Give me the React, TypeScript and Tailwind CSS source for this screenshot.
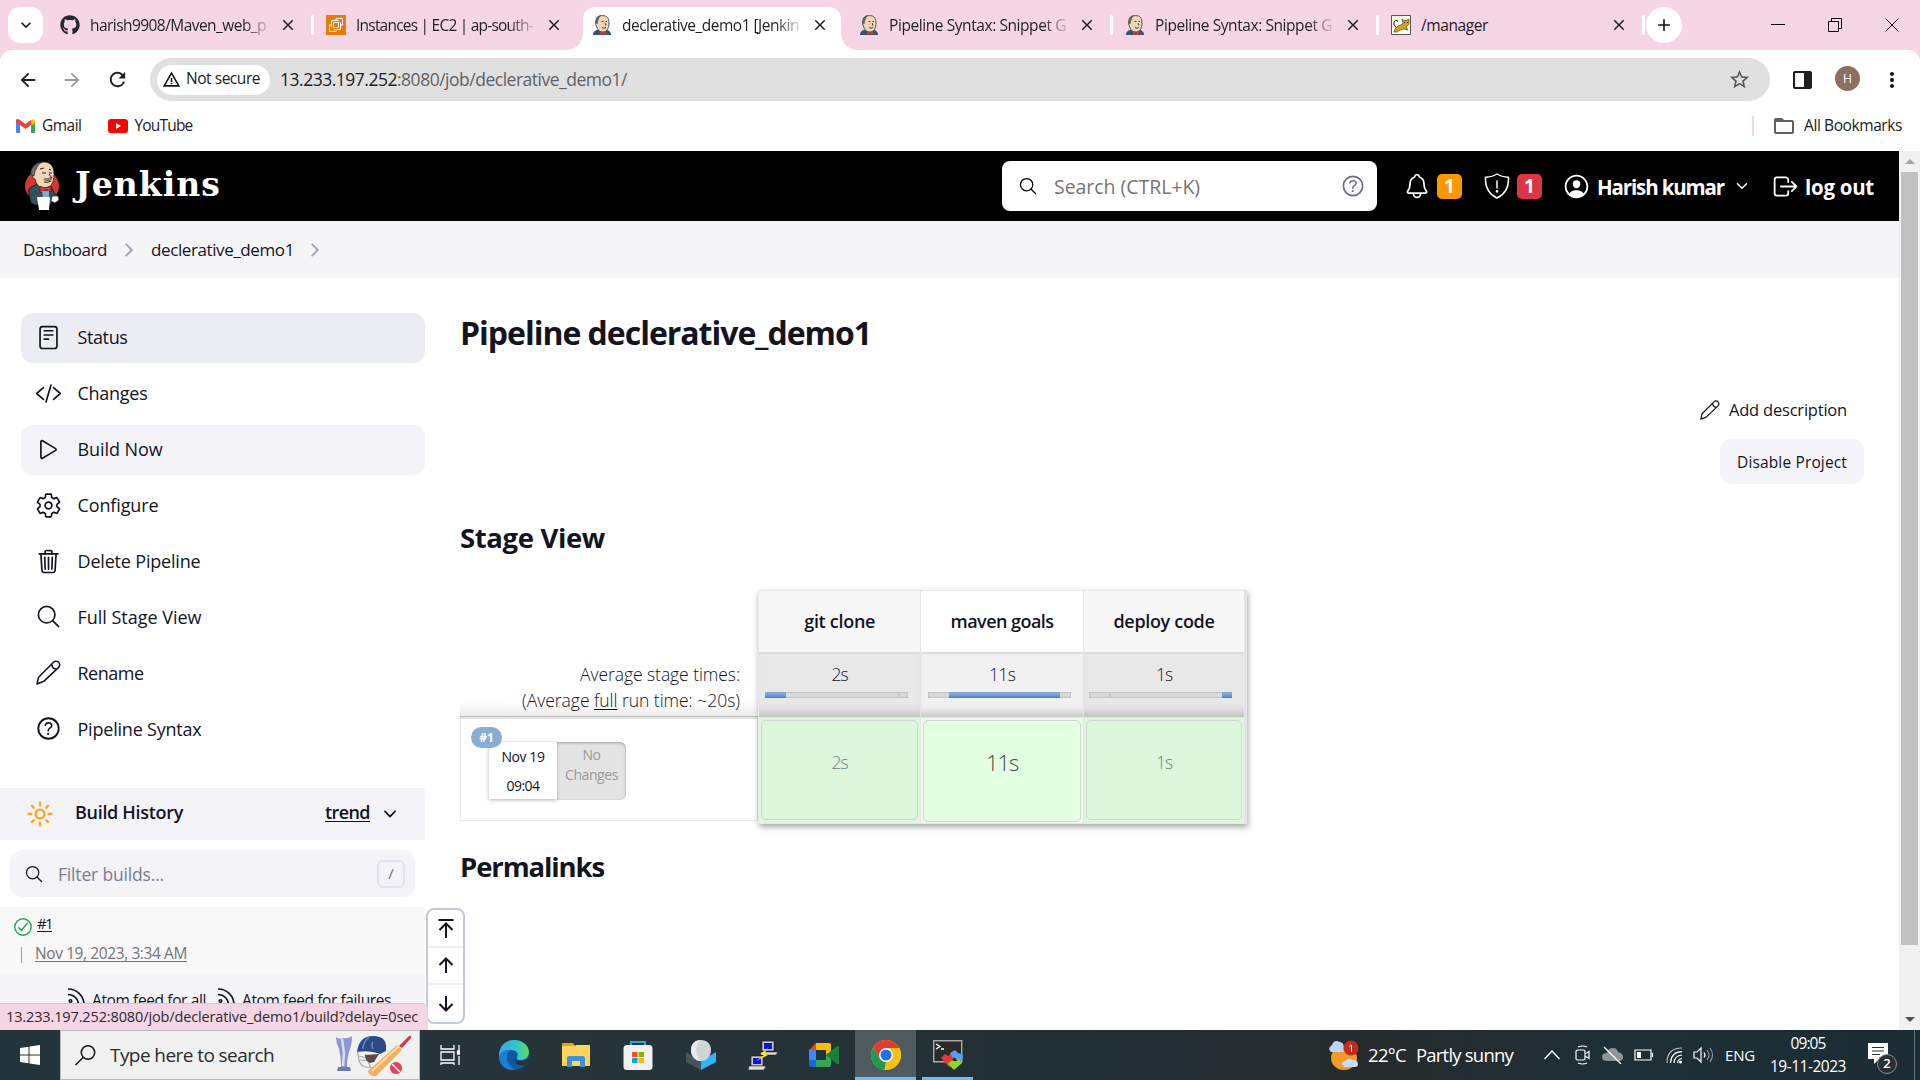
import React, { useLayoutEffect, useRef, useState } from "react";
import {
  IoReaderOutline, IoCodeSlashOutline, IoPlayOutline, IoSettingsOutline, IoTrashOutline, IoSearchOutline,
  IoHelpCircleOutline, IoPersonCircleOutline, IoLogOutOutline, IoSunnyOutline, IoChevronForwardOutline,
  IoChevronDownOutline, IoNotificationsOutline, IoCheckmarkCircleOutline,
} from "react-icons/io5";
import { MdArrowBack, MdArrowForward, MdRefresh, MdWarningAmber, MdClose, MdAdd, MdExpandMore, MdStarBorder, MdFolderOpen, MdMoreVert } from "react-icons/md";
import { FaGithub } from "react-icons/fa";

/* Single line of text whose letter spacing is tuned so that it spans `w` pixels. */
function T({ w, className = "", children }: { w: number; className?: string; children: React.ReactNode }) {
  const ref = useRef<HTMLSpanElement>(null);
  const [sp, setSp] = useState(0);
  useLayoutEffect(() => {
    const el = ref.current;
    if (!el) return;
    const n = Math.max(1, (el.textContent || "").length);
    setSp((w - el.getBoundingClientRect().width) / n);
  }, [w]);
  return (
    <span className={"block shrink-0 whitespace-nowrap " + className} style={{ width: w }}>
      <span ref={ref} style={{ letterSpacing: sp }}>{children}</span>
    </span>
  );
}

function Butler({ className }: { className: string }) {
  return (
    <svg viewBox="0 0 20 20" className={className}>
      <path d="M1 20c0-3 2-5 5-5l8 0c3 0 5 2 5 5z" fill="#33566b" />
      <path d="M4 7C4 2 7 .6 10.500.6 15 .6 17 3 17 8c0 5-2 9-6 9-4 0-6-3-6.500-6C3.500 10 3.500 8 4 7z" fill="#f0d6b7" stroke="#333" strokeWidth=".8" />
      <path d="M3.800 8C3.500 4 5 1 8.500.8 7 2 6.500 3 6.600 4.500 5.500 5 5.500 7 5.300 8.500z" fill="#6d6b6d" stroke="#333" strokeWidth=".5" />
      <path d="M9.500 6.500h2M13.500 6.500h1.500M13 8l1 2h-1M10 12.500q2 1.500 4 0" stroke="#333" strokeWidth=".9" fill="none" />
      <path d="M8 16l3 1.500L14 16v4l-3-1.300L8 20z" fill="#d33833" />
    </svg>
  );
}

function JenkinsLogo() {
  return (
    <svg viewBox="0 0 36 50" className="h-[50px] w-9 shrink-0">
      <ellipse cx="18" cy="25" rx="17" ry="16" fill="#d33833" />
      <path d="M5 28c4-4 9-5 13-5 6 0 11 3 12 9l4 3v5l-6 1-2 3H11l-4-2c-1-5-3-9-2-14z" fill="#335061" stroke="#111" strokeWidth=".8" />
      <path d="M9 14C8 6 13 1 20 1c7 0 10 5 10 12 0 9-3 14-10 14-5 0-8-4-9-9-2 0-3-2-2-4z" fill="#f0d6b7" stroke="#222" strokeWidth=".8" />
      <path d="M7 14C6 8 10 2 18 1c-3 2-5 4-5.500 7-2 1-1.500 5-2.500 7z" fill="#6d6b6d" stroke="#222" strokeWidth=".6" />
      <path d="M16 8l4-1M25 8l2 1M18 12h4M25 12h3M25 13l3 4h-3M20 21q4 1 7-1" stroke="#222" fill="none" strokeWidth="1" />
      <path d="M19 18c3-2 6 0 8-1l1 2c-3 2-7 2-9-1z" fill="#8a7a6a" />
      <path d="M16 25l5 2 6-2v6l-5-2-6 3z" fill="#d33833" stroke="#111" strokeWidth=".5" />
      <path d="M18 30h7v6h-6z" fill="#81b0c4" />
      <path d="M13 36h12l1 1-1 12H15z" fill="#fff" />
      <path d="M28 35l6 0 1 4-4 3-4-2z" fill="#fff" stroke="#222" strokeWidth=".7" />
    </svg>
  );
}

function Pencil({ className }: { className: string }) {
  return (
    <svg viewBox="0 0 24 24" className={className} fill="none" stroke="currentColor" strokeWidth="1.500" strokeLinejoin="round" strokeLinecap="round">
      <path d="M1 23l1.500-6.500L16.800 2.200a3.400 3.400 0 0 1 4.900 4.900L7.500 20.500z M15.500 5a3.500 3.500 0 0 0 3.600 3.600" />
    </svg>
  );
}

function Feed() {
  return (
    <svg viewBox="0 0 17 17" className="h-[17px] w-[17px] shrink-0" fill="none" stroke="#14141f" strokeWidth="1.600">
      <path d="M0 1c9 0 16 7 16 16M0 6.500c6 0 10.500 4.500 10.500 10.500" /><circle cx="2.500" cy="13" r="1.300" />
    </svg>
  );
}

function Shield() {
  return (
    <svg viewBox="0 0 26 26" className="h-[26px] w-[26px] shrink-0" fill="none" stroke="white" strokeWidth="1.500" strokeLinejoin="round" strokeLinecap="round">
      <path d="M13 1c3 2 7 3 11.500 3.200C25 14 21.500 21 13 25 4.500 21 1 14 1.500 4.200 6 4 10 3 13 1zM13 8v7" /><circle cx="13" cy="18.300" r=".6" fill="white" />
    </svg>
  );
}

function Tab({ icon, text, w, fade = true, className }: { icon: React.ReactNode; text: string; w: number; fade?: boolean; className: string }) {
  return (
    <div className={"flex h-9 shrink-0 items-center " + className}>
      {icon}
      <div className={"ml-2.5 mt-px w-[178px] shrink-0 pt-px text-[15.5px] text-[#1f2023] " + (fade ? "[mask-image:linear-gradient(to_right,black_86%,rgba(0,0,0,0.15))]" : "")}>
        <T w={w}>{text}</T>
      </div>
      <MdClose className="ml-[11px] h-[18px] w-[18px] shrink-0 text-[#1f2023]" />
    </div>
  );
}

const Sep = () => <div className="h-5 w-[3px] shrink-0 rounded bg-white" />;

function Browser() {
  const fav = <Butler className="h-5 w-5 shrink-0" />;
  return (
    <>
      <div className="flex h-[50px] items-start bg-[#f6d5e4] pt-[7px]">
        <div className="ml-2 flex h-9 w-[35px] shrink-0 items-center justify-center rounded-xl bg-white"><MdExpandMore className="h-5 w-5" /></div>
        <div className="flex h-9 w-[540px] shrink-0 items-center">
          <Tab className="ml-[17px] w-[251px]" icon={<FaGithub className="h-5 w-5 shrink-0 text-[#24292f]" />} text="harish9908/Maven_web_p" w={176} />
          <Sep />
          <Tab
            className="ml-3 w-[240px]"
            icon={
              <svg viewBox="0 0 20 20" className="h-5 w-5 shrink-0"><path fill="#e87b0a" d="M0 0h20v20H0z" /><path d="M7.500 7.500h5v5h-5zM10 5V3.500h6.500V10H15M10 15v1.500H3.500V10H5M5.500 12.500V5.500h7M14.500 7.500v7h-7" fill="none" stroke="#fff" strokeWidth="1" /></svg>
            }
            text="Instances | EC2 | ap-south-"
            w={177}
          />
        </div>
        <div className="relative h-[43px] w-[258px] shrink-0 rounded-t-xl bg-white pl-[9px]">
          <div className="absolute -left-4 bottom-0 h-4 w-4 bg-[radial-gradient(circle_at_0_0,#f6d5e4_15.5px,white_16px)]" />
          <div className="absolute -right-4 bottom-0 h-4 w-4 bg-[radial-gradient(circle_at_100%_0,#f6d5e4_15.5px,white_16px)]" />
          <Tab className="" icon={fav} text="declerative_demo1 [Jenkin" w={177} />
        </div>
        <div className="flex h-9 items-center">
          <Tab className="ml-[18px] w-[251px]" icon={fav} text="Pipeline Syntax: Snippet G" w={177} />
          <Sep />
          <Tab className="ml-[12px] w-[251px]" icon={fav} text="Pipeline Syntax: Snippet G" w={177} />
          <Sep />
          <Tab
            className="ml-[12px] w-[251px]"
            icon={
              <svg viewBox="0 0 20 20" className="h-5 w-5 shrink-0"><path d="M.5.5h19v19H.5z" fill="#fffef2" stroke="#555" /><path d="M3 17q1-5 4-6l5-2-1-5 2 1.500h3L18 4v5l-3 3 2 3-4-1-4 1-3 2z" fill="#d2a41c" stroke="#5c4a12" strokeWidth=".7" /><path d="M5 12Q2 10 3 7t4-1M13 7.500h1M16 7.500h1" stroke="#222" fill="none" /></svg>
            }
            text="/manager"
            w={67}
            fade={false}
          />
          <Sep />
          <div className="ml-[1px] flex h-9 w-9 shrink-0 items-center justify-center rounded-full bg-white"><MdAdd className="h-5 w-5" /></div>
        </div>
        <div className="ml-auto mr-[21px] mt-[11px] flex w-[128px] shrink-0 items-center justify-between">
          <svg viewBox="0 0 14 14" className="h-3.5 w-3.5"><path d="M0 6.500h14" stroke="#000" /></svg>
          <svg viewBox="0 0 14 14" className="h-3.5 w-3.5"><path d="M.5 3.500h10v10H.5zM3.500 3.500v-3h10v10h-3" fill="none" stroke="#000" /></svg>
          <svg viewBox="0 0 14 14" className="h-3.5 w-3.5"><path d="M.5.5l13 13M13.500.5l-13 13" stroke="#000" /></svg>
        </div>
      </div>
      <div className="bg-[#f6d5e4]">
        <div className="flex h-[51px] items-start rounded-t-xl bg-white pt-2">
          <div className="flex h-[43px] w-[150px] shrink-0 items-center pl-[17px]">
            <MdArrowBack className="h-[22px] w-[22px] text-[#1f2023]" />
            <MdArrowForward className="ml-[22px] h-[22px] w-[22px] text-[#9a9a9c]" />
            <MdRefresh className="ml-[23px] h-[23px] w-[23px] text-[#1f2023]" />
          </div>
          <div className="flex h-[43px] w-[1620px] shrink-0 items-center rounded-full bg-[#e0e0e1] px-[7px]">
            <div className="flex h-[30px] w-[113px] shrink-0 items-center rounded-full bg-white pl-[5px]">
              <MdWarningAmber className="h-[19px] w-[19px]" />
              <T w={74} className="-mt-0.5 ml-[5px] text-[15.5px] text-[#1f2023]">Not secure</T>
            </div>
            <T w={347} className="ml-[10px] text-[17.5px] text-[#606164]"><span className="text-[#1f2023]">13.233.197.252</span>:8080/job/declerative_demo1/</T>
            <MdStarBorder className="ml-auto mr-3 h-[23px] w-[23px] text-[#55565a]" />
          </div>
          <div className="flex h-[43px] flex-1 items-center pl-[23px]">
            <svg viewBox="0 0 19 18" className="h-[18px] w-[19px]"><rect x="1" y="1" width="17" height="16" rx="1.500" fill="none" stroke="#1f2023" strokeWidth="2.200" /><path d="M11 1h7v16h-7z" fill="#1f2023" /></svg>
            <div className="-mt-0.5 ml-[23px] flex h-[25px] w-[25px] items-center justify-center rounded-full bg-[#8d6e63] text-[12px] text-white">H</div>
            <MdMoreVert className="ml-[20px] h-6 w-6" />
          </div>
        </div>
      </div>
      <div className="flex h-[50px] items-center bg-white text-[15.5px] text-[#1f2023]">
        <svg viewBox="0 0 19 14" className="ml-4 h-3.5 w-[19px]"><path d="M0 2v11q0 1 1 1h3V5z" fill="#4285f4" /><path d="M19 2v11q0 1-1 1h-3V5z" fill="#34a853" /><path d="M4 1l5.500 4L15 1v5l-5.500 4L4 6 0 3V1q1-2 4 0z" fill="#ea4335" /><path d="M15 1q3-2 4 1v2l-4 3z" fill="#fbbc04" /></svg>
        <T w={39.500} className="ml-[7px] -mt-px">Gmail</T>
        <svg viewBox="0 0 20 14" className="ml-[26px] h-3.5 w-5"><rect width="20" height="14" rx="3" fill="red" /><path d="M8 4l5 3-5 3z" fill="#fff" /></svg>
        <T w={58} className="ml-[7px] -mt-px">YouTube</T>
        <div className="ml-auto h-5 w-[2px] bg-[#f6d5e4]" />
        <MdFolderOpen className="ml-[18px] h-6 w-6 text-[#5f6064]" />
        <T w={98} className="-mt-px ml-[8px] mr-[18px]">All Bookmarks</T>
      </div>
    </>
  );
}

function Header() {
  return (
    <header className="flex h-[70px] items-center bg-black pl-6 text-[20.5px] font-bold text-white">
      <JenkinsLogo />
      <T w={146} className="ml-[15px] pb-1 font-['DejaVu_Serif'] text-[33px] leading-none">Jenkins</T>
      <div className="ml-auto flex h-[50px] w-[375px] shrink-0 items-center rounded-lg bg-white pl-4 pr-3 font-normal">
        <IoSearchOutline className="h-5 w-5 text-black" />
        <T w={146} className="ml-4 mt-0.5 text-[19.5px] text-[#757575]">Search (CTRL+K)</T>
        <IoHelpCircleOutline className="-mr-0.5 ml-auto h-7 w-7 text-[#6c6c93]" />
      </div>
      <IoNotificationsOutline className="ml-[26px] h-[28px] w-[28px] shrink-0" />
      <div className="ml-[6px] flex h-[25px] w-[25px] shrink-0 items-center justify-center rounded-[5px] bg-[#ff9800] text-[19px]">1</div>
      <div className="ml-[22px] shrink-0"><Shield /></div>
      <div className="ml-[7px] flex h-[25px] w-[25px] shrink-0 items-center justify-center rounded-[5px] bg-[#dc3545] text-[19px]">1</div>
      <IoPersonCircleOutline className="ml-[20px] h-[29px] w-[29px] shrink-0" />
      <T w={127} className="ml-[6px] mt-0.5">Harish kumar</T>
      <IoChevronDownOutline className="ml-[10px] h-[16px] w-[16px] shrink-0" />
      <IoLogOutOutline className="ml-[21px] h-[29px] w-[29px] shrink-0" />
      <T w={69} className="ml-[5px] mr-[25px] mt-0.5">log out</T>
    </header>
  );
}

const menu = [
  { t: "Status", w: 50, i: <IoReaderOutline />, c: "bg-[#ecedf3]" },
  { t: "Changes", w: 70, i: <IoCodeSlashOutline />, c: "" },
  { t: "Build Now", w: 85, i: <IoPlayOutline />, c: "bg-[#f3f3f8]" },
  { t: "Configure", w: 81, i: <IoSettingsOutline />, c: "" },
  { t: "Delete Pipeline", w: 123, i: <IoTrashOutline />, c: "" },
  { t: "Full Stage View", w: 124, i: <IoSearchOutline />, c: "" },
  { t: "Rename", w: 66, i: <Pencil className="p-px" />, c: "" },
  { t: "Pipeline Syntax", w: 124, i: <IoHelpCircleOutline className="scale-110" />, c: "" },
];

function Sidebar() {
  return (
    <aside className="w-[425px] shrink-0 pt-[35px]">
      <nav className="flex flex-col gap-[6px] pl-[21px]">
        {menu.map((m) => (
          <div key={m.t} className={"flex h-[49.9px] items-center rounded-xl pb-px pl-[14px] text-[18px] " + m.c}>
            <span className="[&>svg]:h-[27px] [&>svg]:w-[27px]">{m.i}</span>
            <T w={m.w} className="mt-px ml-[15.5px]">{m.t}</T>
          </div>
        ))}
      </nav>
      <div className="mt-[34px] flex h-[52px] items-center bg-[#f3f3f8] pl-[26px] text-[18px] font-semibold">
        <IoSunnyOutline className="h-[28px] w-[28px] text-[#fea820] [&_*]:[stroke-width:44px]" />
        <T w={108} className="-mt-[3px] ml-[21px]">Build History</T>
        <T w={45} className="-mt-[3px] ml-[142px] underline underline-offset-2">trend</T>
        <IoChevronDownOutline className="ml-[11px] h-[18px] w-[18px]" />
      </div>
      <div className="ml-2.5 mt-2.5 flex h-[47px] w-[405px] items-center rounded-xl bg-[#f3f3f8] pl-3.5 pr-2.5 text-[17.5px]">
        <IoSearchOutline className="h-5 w-5" />
        <T w={106} className="ml-[14px] text-[#7b7b93]">Filter builds...</T>
        <div className="ml-auto flex h-7 w-7 items-center justify-center rounded-md border-2 border-[#e2e2ec] text-[15px] text-[#6a6a80]">/</div>
      </div>
      <div className="mt-2.5 h-[68px] bg-[#f8f8f8] pt-1">
        <div className="flex h-6 items-center pl-3">
          <IoCheckmarkCircleOutline className="mt-[7px] h-[22px] w-[22px] text-[#1ea64b]" />
          <T w={15} className="ml-[3px] text-[15px] underline underline-offset-2">#1</T>
        </div>
        <div className="mt-[7px] flex h-6 items-center pl-[21px]">
          <div className="mt-px h-4 w-px bg-[#9aa0a8]" />
          <T w={152} className="-mt-px ml-[13px] text-[15.5px] text-[#73737b] underline underline-offset-2">Nov 19, 2023, 3:34 AM</T>
        </div>
      </div>
      <div className="flex h-[55px] items-start bg-[#f3f3f8] pl-[68px] pt-[13px] text-[15.500px]">
        <Feed />
        <T w={114} className="ml-[7px] mt-px">Atom feed for all</T>
        <div className="ml-[12px]"><Feed /></div>
        <T w={149} className="ml-[7px] mt-px">Atom feed for failures</T>
      </div>
    </aside>
  );
}

const stages = [
  { n: "git clone", nw: 71, t: "2s", tw: 16.500, from: 0, len: 21, tick: 133, hot: false },
  { n: "maven goals", nw: 103, t: "11s", tw: 26, from: 21, len: 111, tick: -1, hot: true },
  { n: "deploy code", nw: 101, t: "1s", tw: 16, from: 133, len: 10, tick: 20, hot: false },
];

function StageTable() {
  return (
    <div className="mt-[34px] flex">
      <div className="h-[232px] w-[298px] pt-[68px]">
        <div className="flex h-[58px] flex-col items-end bg-[linear-gradient(to_bottom,white_75%,#ececec)] pr-[18px] pt-[3px] text-[17.5px] font-light leading-[26px]">
          <T w={160}>Average stage times:</T>
          <T w={218}>(Average <span className="underline underline-offset-2">full</span> run time: ~20s)</T>
        </div>
        <div className="h-[3px] border-t border-[#bdbdbd] bg-[#e2e2e2]" />
        <div className="h-[102px] border-x border-b border-[#e6e6e6] pl-2.5 pt-2">
          <div className="relative z-10 flex h-[21px] w-[31px] items-center justify-center rounded-full bg-[#89add2] text-[12px] font-bold text-white">#1</div>
          <div className="-mt-[6px] ml-[18px] flex">
            <div className="flex h-[57px] w-[68px] flex-col items-center gap-2 bg-white pt-1 text-[14px] leading-[21px] shadow-[0_1px_4px_rgba(0,0,0,0.3)]">
              <T w={43}>Nov 19</T>
              <T w={33}>09:04</T>
            </div>
            <div className="flex h-[58px] w-[69px] flex-col items-center rounded-r-md bg-[#e4e4e4] pt-[3px] text-[14px] leading-5 text-[#9a9a9a] shadow-[inset_0_1px_3px_rgba(0,0,0,0.3)]">
              <T w={18}>No</T>
              <T w={53}>Changes</T>
            </div>
          </div>
        </div>
      </div>
      <div className="flex h-[234px] border border-[#e8e8ec] shadow-[1px_3px_6px_rgba(0,0,0,0.35)]">
        {stages.map((s) => (
          <div key={s.n} className="flex w-[162.400px] flex-col border-r border-[#e6e2e8] last:border-r-[2px]">
            <div className={"flex h-[63px] items-center justify-center border-b-2 border-[#dcdcdc] text-[18px] font-semibold " + (s.hot ? "bg-white" : "bg-[#f7f7f7]")}>
              <T w={s.nw}>{s.n}</T>
            </div>
            <div className={"flex h-[63px] flex-col items-center pt-[7px] text-[17.5px] font-light leading-[26px] shadow-[inset_0_-11px_10px_-7px_rgba(0,0,0,0.2)] " + (s.hot ? "bg-[#f1f1f1]" : "bg-[#e8e8e8]")}>
              <T w={s.tw}>{s.t}</T>
              <div className="relative mr-[6px] mt-[5px] h-[6px] w-[143px] bg-[#dadada] shadow-[inset_0_0_2px_rgba(0,0,0,0.35)]">
                <div className="absolute top-0 h-[6px] bg-[linear-gradient(#82a7d6_40%,#4879c9)]" style={{ left: s.from, width: s.len }} />
                {s.tick > 0 && <div className="absolute top-0 h-[6px] w-[2px] bg-[#c8c8c8]" style={{ left: s.tick }} />}
              </div>
            </div>
            <div className={"flex-1 border-t border-[#e6e2e8] p-[2px] " + (s.hot ? "bg-[#f0f7ee] pb-px" : "bg-[#ddf7dc] pb-[3px]")}>
              <div className={"flex h-full justify-center rounded-[5px] border border-[#d0d6d2] font-light " + (s.hot ? "bg-[#e3ffe1] pt-[28px] text-[22px] leading-[27px] text-[#444a4d]" : "bg-[#ddf7dc] pt-[27px] text-[17.5px] leading-[28px] text-[#757f7a]")}>
                <T w={s.hot ? 32 : s.tw}>{s.t}</T>
              </div>
            </div>
          </div>
        ))}
      </div>
    </div>
  );
}

function Main() {
  return (
    <main className="flex-1 pl-[35px]">
      <div className="pt-[30px] text-[32px] font-bold leading-[50px]"><T w={411}>Pipeline declerative_demo1</T></div>
      <div className="flex flex-col items-end pr-[35px] pt-[36px] text-[16.500px]">
        <div className="flex h-8 items-center pr-[17px]">
          <Pencil className="h-5 w-5" />
          <T w={118} className="ml-[9px]">Add description</T>
        </div>
        <div className="mt-[13px] flex h-[45px] w-[144px] items-center justify-center rounded-xl bg-[#f5f5f9] pt-0.5 text-[15.500px]"><T w={110}>Disable Project</T></div>
      </div>
      <div className="mt-[36px] text-[27.500px] font-bold leading-[36px]"><T w={145}>Stage View</T></div>
      <StageTable />
      <div className="mt-[25px] text-[27.500px] font-bold leading-[36px]"><T w={144}>Permalinks</T></div>
    </main>
  );
}

function NavPad() {
  return (
    <div className="absolute left-[426px] top-[757px] h-[116px] w-[39px] divide-y-2 divide-[#ededf0] rounded-lg border-2 border-[#c3cbd2] bg-white">
      {[0, 1, 2].map((k) => (
        <div key={k} className={"flex h-[37.500px] items-center justify-center " + (k === 0 ? "pt-[5px]" : "")}>
          <svg viewBox="0 0 20 22" className={"h-[22px] w-5 " + (k === 2 ? "rotate-180" : "")} fill="none" stroke="#14141f" strokeWidth="2">
            <path d="M10 19V5M3.500 11l6.500-6.500L16.500 11" />
            {k === 0 && <path d="M2.500 1h15" />}
          </svg>
        </div>
      ))}
    </div>
  );
}

const taskIcons: { w: string; svg: React.ReactNode }[] = [
  { w: "w-[62px]", svg: <svg viewBox="0 0 30 30" className="h-[30px] w-[30px]"><defs><linearGradient id="ea" x1="0" y1="0" x2="1" y2="0"><stop stopColor="#35a9e8" /><stop offset=".6" stopColor="#35c6c9" /><stop offset="1" stopColor="#62db5a" /></linearGradient></defs><circle cx="15" cy="15" r="15" fill="#0c59a4" /><path d="M0 14C1 5 7 0 15 0c9 0 15 6 15 12 0 5-4 8-8 8-3 0-5-1-4-3 2-2 0-7-6-7C6 10 1 13 0 19z" fill="url(#ea)" /><path d="M0 17c1-5 6-8 12-7-4 2-5 7-3 12 1 3 4 6 7 8C7 31 0 25 0 17z" fill="#1b7fd1" /><path d="M17 17c-1 2 1 4 4 4 3 0 6-1 9-4v4l-2 3c-5 3-12 1-12-4 0-1 0-2 1-3z" fill="#24343c" /></svg> },
  { w: "w-[62px]", svg: <svg viewBox="0 0 30 26" className="h-[26px] w-[30px]"><path d="M1 2q0-1 1-1h10l3 4H1z" fill="#e3a21a" /><path d="M1 4h13l1-1h14v20q0 1-1 1H2q-1 0-1-1z" fill="#ffd45c" /><path d="M6 25v-9q0-2 2-2h14q2 0 2 2v9h-5v-6h-8v6z" fill="#3b93d9" /></svg> },
  { w: "w-[62px]", svg: <svg viewBox="0 0 30 30" className="h-[30px] w-[30px]"><path d="M8 6V2h14v4" fill="none" stroke="#2aa5e0" strokeWidth="2" /><rect x=".5" y="5" width="29" height="25" rx="3.500" fill="#f2f2f2" /><path d="M9 12h5.500v5H9z" fill="#f25022" /><path d="M15.500 12H21v5h-5.500z" fill="#7fba00" /><path d="M9 18h5.500v5H9z" fill="#00a4ef" /><path d="M15.500 18H21v5h-5.500z" fill="#ffb900" /></svg> },
  { w: "w-[63px]", svg: <svg viewBox="0 0 30 30" className="h-[30px] w-[30px]"><path d="M0 12l15 9v9L0 22z" fill="#46545e" /><path d="M30 12l-15 9v9l15-8z" fill="#30b4f6" /><path d="M25 10c0 6-4 11-10 11S5 16 5 10 9 0 15 0s10 4 10 10z" fill="#d2d5d8" /><path d="M15 0c-6 2-6 17 0 21C9 21 5 16 5 10S9 0 15 0z" fill="#e9ebec" /></svg> },
  { w: "w-[61px]", svg: <svg viewBox="0 0 30 30" className="h-[30px] w-[30px]"><path d="M14 1h12v10H14zM3 16h12v10H3z" fill="#c8c8c8" stroke="#111" strokeWidth=".6" /><path d="M16 3h8v6h-8zM5 18h8v6H5z" fill="#0b13e0" /><path d="M13 12h17l-2 3H13zM1 26h17l-2 4H0z" fill="#ddd" stroke="#111" strokeWidth=".5" /><path d="M20 8l-8 6 4 1-8 6 12-6-4-1z" fill="#ffee00" /></svg> },
  { w: "w-[61px]", svg: <svg viewBox="0 0 30 24" className="h-6 w-[30px]"><path d="M0 7L7 0v7z" fill="#ea4335" /><path d="M7 0h13q2 0 2 2v7l-5 3V7H7z" fill="#fbbc04" /><path d="M0 7h7v10H0z" fill="#4285f4" /><path d="M0 17h7v7H2q-2 0-2-2z" fill="#1967d2" /><path d="M7 17h10v-5l5-2v12q0 2-2 2H7z" fill="#34a853" /><path d="M17 12l11-9q2-1 2 1v16q0 2-2 1z" fill="#188038" /></svg> },
];

function Taskbar() {
  return (
    <footer className="flex h-[50px] items-center bg-[linear-gradient(to_right,#23343c,#27343a_30%,#223036_55%,#262b2c_72%,#1f2f37_82%,#1b2c35)] text-white">
      <div className="flex w-[60px] shrink-0 justify-center"><svg viewBox="0 0 20 20" className="h-5 w-5" fill="#fff"><path d="M0 3l8.500-1.200v7.700H0zM9.500 1.600L20 0v9.500H9.500zM0 10.500h8.500v7.700L0 17zM9.500 10.500H20V20L9.500 18.400z" /></svg></div>
      <div className="flex h-[50px] w-[360px] shrink-0 items-center border border-[#b5bbbd] bg-[#f1f1f1] pl-[14px] text-[#2b2b2b]">
        <svg viewBox="0 0 21 21" className="h-[21px] w-[21px]" fill="none" stroke="#111" strokeWidth="1.500"><circle cx="13" cy="7.500" r="6.700" /><path d="M8.300 12.300L.5 20" /></svg>
        <T w={164} className="ml-[14px] text-[19px]">Type here to search</T>
        <svg viewBox="0 0 76 42" className="ml-auto mr-[7px] h-[42px] w-[76px]">
          <path d="M0 3q4 3 7.500 1Q12 5 16 2q0 8-2 13-3 8-3 18H5q0-10-2-18Q0 9 0 3z" fill="#8e98cf" /><path d="M6 5l2 14-1 13" stroke="#d8ddf5" strokeWidth="2.500" fill="none" /><path d="M2 33h12l1 4H1z" fill="#6e79ba" />
          <path d="M22 18q0 14 8 15l10 2M24 26l15 1M29 20l6 14M23 22l16 4" stroke="#a9a9ad" strokeWidth="1.200" fill="none" /><path d="M29 21q0 6 5 8l4-1 5-8z" fill="#5d4a48" />
          <path d="M21 18Q23 2 37 2q15 0 13 15l-6 3q-10-4-23-2z" fill="#2e4a86" /><path d="M33 3q-6 5-6 12M37 8q-2 3 0 7" stroke="#6f8ac2" strokeWidth="1.500" fill="none" />
          <path d="M32 37L61 11l5 5-26 26q-8 0-8-5z" fill="#f3ae5f" /><path d="M36 37l27-25" stroke="#ffd9a3" strokeWidth="2" /><path d="M63 12L73 2q3-1 2 2L66 14z" fill="#d6374b" />
          <circle cx="60" cy="34" r="6" fill="#e83e57" /><path d="M56 30l8 8" stroke="#fff" strokeWidth="1.500" />
        </svg>
      </div>
      <div className="flex w-[61px] shrink-0 justify-center pr-px"><svg viewBox="0 0 20 20" className="h-5 w-5" fill="none" stroke="#fff" strokeWidth="1.300"><path d="M1 0v4h13V0M1 7h13v8H1zM1 20v-2h13v2M19 0v5M19 11v9" /><path d="M17.500 6h2.500v3h-2.500z" fill="#fff" /></svg></div>
      <div className="w-[2px] shrink-0" />
      {taskIcons.map((t, i) => <div key={i} className={"flex shrink-0 justify-center " + t.w}>{t.svg}</div>)}
      <div className="ml-px flex h-[50px] w-[61px] shrink-0 items-center justify-center border-b-[3px] border-[#76b9ed] bg-[#4e5c62] pt-[3px]">
        <svg viewBox="0 0 30 30" className="h-[30px] w-[30px]"><circle cx="15" cy="15" r="15" fill="#fbc016" /><path d="M2 7.500a15 15 0 0 1 26 0L28.500 8.500H15l-6.500 10z" fill="#e33b2e" /><path d="M2 7.500l7 11.200L15 22l-1.500 8A15 15 0 0 1 2 7.500z" fill="#229a4b" /><path d="M15 22l-1.500 8h1.500a15 15 0 0 0 13.300-22H15z" fill="#fbc016" /><circle cx="15" cy="15" r="7" fill="#fff" /><circle cx="15" cy="15" r="5.500" fill="#1a73e8" /></svg>
      </div>
      <div className="ml-[6px] flex h-[50px] w-[51px] shrink-0 items-center justify-center border-b-[3px] border-[#76b9ed] pt-[3px]">
        <svg viewBox="0 0 30 30" className="h-[30px] w-[30px]"><path d="M.7.7h28v21H.7z" fill="#2b2b2b" stroke="#aaa" strokeWidth="1.400" /><path d="M3 4l4 2.500L3 9M8 9h3" stroke="#fff" fill="none" strokeWidth="1.300" /><path d="M8 18l4-4 3 2 3-2 3 4-3 3 2 3-4 3z" fill="#e2393b" /><path d="M17 13l5-3 3 3 4 1 1 4-4 4-4-4-3-1z" fill="#5c9bf5" /><path d="M15 24l4-4 3 2 4-3 3 4-8 7z" fill="#8bdc1f" /></svg>
      </div>
      <div className="ml-auto flex h-[50px] shrink-0 items-center">
        <svg viewBox="0 0 32 32" className="h-8 w-8"><ellipse cx="16" cy="19" rx="13" ry="12" fill="#f3992a" /><path d="M3 13q-4-4 1-7 2-6 8-3 5 1 3 7l1 3z" fill="#bcd4f6" /><path d="M15 27q-3-4 2-5 3-4 7-1 5-1 6 4 0 3-3 3H17z" fill="#c9ddf8" /><circle cx="23" cy="9" r="7.500" fill="#c42b1c" /><path d="M21.500 7.500L23.500 6v7" stroke="#fff" fill="none" /></svg>
        <T w={38} className="ml-[8px] text-[18.500px]">22°C</T>
        <T w={97} className="ml-[10px] text-[18.500px]">Partly sunny</T>
        <svg viewBox="0 0 16 10" className="ml-[31px] h-2.5 w-4" fill="none" stroke="#fff" strokeWidth="1.400"><path d="M.5 9L8 1l7.500 8" /></svg>
        <svg viewBox="0 0 16 20" className="ml-[15px] h-5 w-4" fill="none" stroke="#fff" strokeWidth="1.200"><rect x="1" y="5" width="9" height="10" rx="1.500" /><path d="M10 9l4-2.500v7L10 11M3 2q5-2 9 0M3 18q5 2 9 0" /></svg>
        <svg viewBox="0 0 21 18" className="ml-[11px] h-[18px] w-[21px]"><path d="M5 15q-5 0-5-4t5-4q1-5 6-5 4 0 5 4 5 1 5 5 0 4-4 4z" fill="#8d9599" /><path d="M2 1l17 17" stroke="#fff" strokeWidth="1.300" /></svg>
        <svg viewBox="0 0 20 12" className="ml-[11px] h-3 w-5" fill="none" stroke="#fff" strokeWidth="1.200"><path d="M1 1h16v10H1zM18.500 4v4" /><path d="M3 3h4v6H3z" fill="#fff" stroke="none" /></svg>
        <svg viewBox="0 0 17 17" className="ml-[12px] h-[17px] w-[17px]" fill="none" stroke="#fff" strokeWidth="1.200"><path d="M1 16Q1 1 16 1" opacity=".7" /><path d="M4.500 16Q5 5 16 4.700M8 16Q8.500 8.500 16 8M11.500 16q.5-4 4.500-4.500" /><circle cx="14.500" cy="15" r="1.500" fill="#fff" stroke="none" /></svg>
        <svg viewBox="0 0 21 18" className="ml-[10px] h-[18px] w-[21px]" fill="none" stroke="#fff" strokeWidth="1.200"><path d="M1 6h3l4-4v14l-4-4H1zM11 6.500q2 2.500 0 5" /><path d="M14 4q4 5 0 10M17 2q5 7 0 14" opacity=".5" /></svg>
        <T w={30} className="ml-[11px] text-[15px]">ENG</T>
        <div className="ml-[15px] flex w-[76px] flex-col items-center text-[15.5px] leading-[23px]"><T w={35}>09:05</T><T w={76}>19-11-2023</T></div>
        <div className="relative ml-[22px] h-[30px] w-[30px]">
          <svg viewBox="0 0 20 22" className="mt-[3px] h-[22px] w-5"><path d="M0 0h20v16h-9l-5 5v-5H0z" fill="#fff" /><path d="M4 4.500h12M4 8h12M4 11.500h8" stroke="#24343c" strokeWidth="1.200" /></svg>
          <div className="absolute left-[9px] top-[14px] flex h-5 w-5 items-center justify-center rounded-full border border-[#8a9194] bg-[#2b2f31] text-[13px] font-semibold">2</div>
        </div>
        <div className="ml-[16px] mr-[5px] h-[50px] w-px bg-[#66737a]" />
      </div>
    </footer>
  );
}

export default function App() {
  return (
    <div className="flex h-[1080px] w-[1920px] flex-col overflow-hidden bg-white font-['Open_Sans','Noto_Sans',sans-serif] text-[#14141f]">
      <Browser />
      <div className="flex h-[879px] shrink-0 overflow-hidden">
        <div className="relative h-[879px] w-[1899px] shrink-0 overflow-hidden">
          <Header />
          <div className="flex h-[57px] items-center bg-[#f5f5f8] pl-[23px] text-[17px]">
            <T w={84}>Dashboard</T>
            <IoChevronForwardOutline className="ml-[12px] h-5 w-5 text-[#a3a3b8]" />
            <T w={143} className="ml-[12px]">declerative_demo1</T>
            <IoChevronForwardOutline className="ml-[11px] h-5 w-5 text-[#a3a3b8]" />
          </div>
          <div className="flex h-[752px]"><Sidebar /><Main /></div>
          <NavPad />
          <div className="absolute bottom-0 left-0 flex h-[27px] w-[428px] items-center rounded-tr-md border-t border-[#dcc3d0] bg-[#f6d5e4] pl-[6px] text-[14.500px] text-[#2b2b2e]"><T w={412}>13.233.197.252:8080/job/declerative_demo1/build?delay=0sec</T></div>
        </div>
        <div className="flex w-[21px] flex-col items-center bg-[#f1f1f1]">
          <div className="flex h-[21px] items-center"><div className="border-x-[5px] border-b-[5px] border-x-transparent border-b-[#a3a3a3]" /></div>
          <div className="h-[773px] w-[17px] bg-[#c1c1c1]" />
          <div className="mt-auto flex h-[21px] items-center"><div className="border-x-[5px] border-t-[5px] border-x-transparent border-t-[#505050]" /></div>
        </div>
      </div>
      <Taskbar />
    </div>
  );
}
